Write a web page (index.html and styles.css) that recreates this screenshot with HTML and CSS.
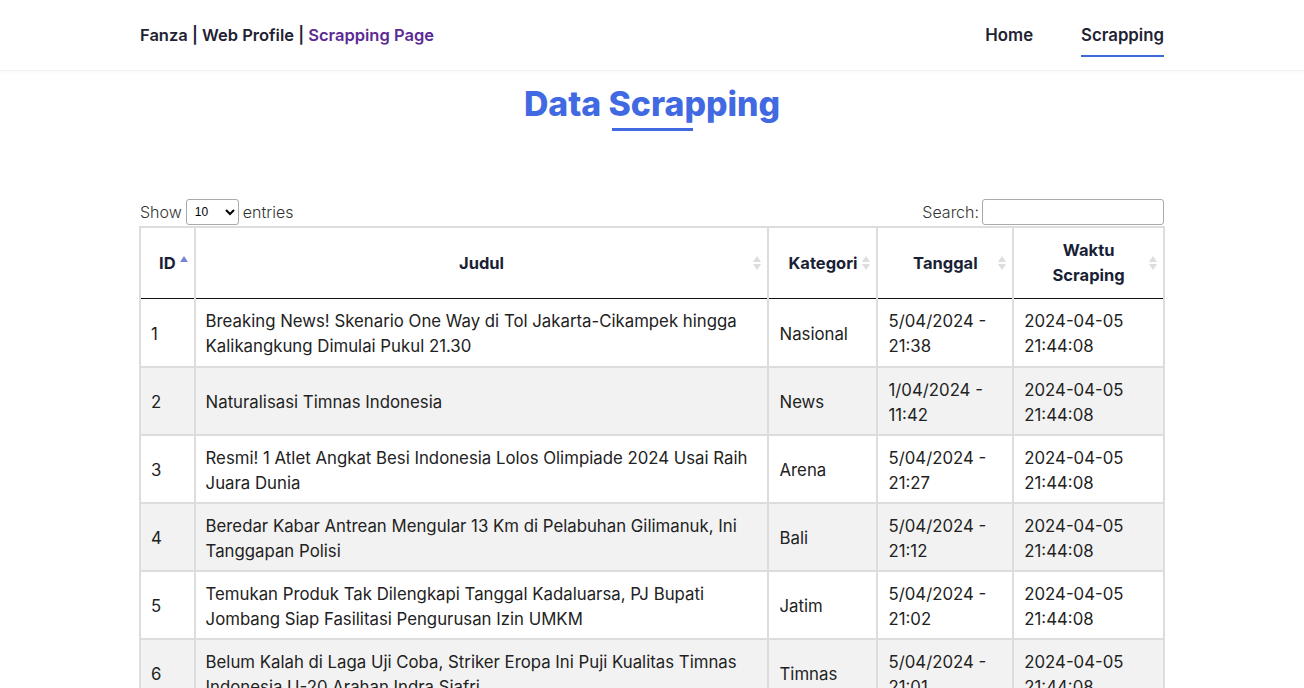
FILE: index.html
```html
<!DOCTYPE html>
<html lang="id">
<head>
<meta charset="utf-8">
<title>Fanza | Web Profile | Scrapping Page</title>
<link rel="stylesheet" href="styles.css">
</head>
<body>
<header class="navbar">
  <div class="container nav-inner">
    <div class="brand">Fanza | Web Profile | <span class="brand-accent">Scrapping Page</span></div>
    <nav class="nav-links">
      <a class="nav-link" href="#">Home</a>
      <a class="nav-link active" href="#">Scrapping</a>
    </nav>
  </div>
</header>
<main class="container">
  <h2 class="page-title">Data Scrapping</h2>
  <div class="title-bar"></div>
  <div class="dt-controls">
    <label class="dt-length">Show <select class="dt-select"><option>10</option></select> entries</label>
    <label class="dt-search">Search:<input class="dt-input" type="text"></label>
  </div>
  <table class="dt-table">
    <colgroup>
      <col class="c-id"><col class="c-judul"><col class="c-kat"><col class="c-tgl"><col class="c-waktu">
    </colgroup>
    <thead>
      <tr>
        <th class="sort asc"><span>ID</span></th>
        <th class="sort"><span>Judul</span></th>
        <th class="sort"><span>Kategori</span></th>
        <th class="sort"><span>Tanggal</span></th>
        <th class="sort"><span>Waktu<br>Scraping</span></th>
      </tr>
    </thead>
    <tbody>
      <tr><td>1</td><td>Breaking News! Skenario One Way di Tol Jakarta-Cikampek hingga Kalikangkung Dimulai Pukul 21.30</td><td>Nasional</td><td>5/04/2024 - 21:38</td><td>2024-04-05 21:44:08</td></tr>
      <tr><td>2</td><td>Naturalisasi Timnas Indonesia</td><td>News</td><td>1/04/2024 - 11:42</td><td>2024-04-05 21:44:08</td></tr>
      <tr><td>3</td><td>Resmi! 1 Atlet Angkat Besi Indonesia Lolos Olimpiade 2024 Usai Raih Juara Dunia</td><td>Arena</td><td>5/04/2024 - 21:27</td><td>2024-04-05 21:44:08</td></tr>
      <tr><td>4</td><td>Beredar Kabar Antrean Mengular 13 Km di Pelabuhan Gilimanuk, Ini Tanggapan Polisi</td><td>Bali</td><td>5/04/2024 - 21:12</td><td>2024-04-05 21:44:08</td></tr>
      <tr><td>5</td><td>Temukan Produk Tak Dilengkapi Tanggal Kadaluarsa, PJ Bupati Jombang Siap Fasilitasi Pengurusan Izin UMKM</td><td>Jatim</td><td>5/04/2024 - 21:02</td><td>2024-04-05 21:44:08</td></tr>
      <tr><td>6</td><td>Belum Kalah di Laga Uji Coba, Striker Eropa Ini Puji Kualitas Timnas Indonesia U-20 Arahan Indra Sjafri</td><td>Timnas</td><td>5/04/2024 - 21:01</td><td>2024-04-05 21:44:08</td></tr>
    </tbody>
  </table>
</main>
</body>
</html>
```
FILE: styles.css
```css
* { box-sizing: border-box; }
html, body { margin: 0; padding: 0; background: #fff; }
body {
  font-family: "Inter", "DejaVu Sans", sans-serif;
  color: #222831;
  font-size: 16px;
}
.container { width: 1024px; margin: 0 auto; }

.navbar {
  height: 71px;
  background: #fff;
  border-bottom: 1px solid #f0f0f0;
  box-shadow: 0 1px 4px rgba(0,0,0,0.04);
}
.nav-inner {
  height: 70px;
  display: flex;
  align-items: center;
  justify-content: space-between;
}
.brand { font-size: 16.5px; font-weight: 600; color: #1f2233; margin-top: -1px; }
.brand-accent { color: #5b2a94; }
.nav-links { display: flex; gap: 48px; height: 100%; align-items: center; }
.nav-link {
  font-size: 16.8px; font-weight: 600; color: #1f2233; text-decoration: none;
  padding-top: 0; padding-bottom: 10px; border-bottom: 2px solid transparent;
  margin-top: 12px;
}
.nav-link.active { border-bottom-color: #3e6ad8; }

.page-title {
  margin: 13px 0 0;
  text-align: center;
  font-size: 33.8px;
  font-weight: 800;
  color: #4169e1;
  line-height: 40px;
}
.title-bar { width: 81px; height: 3px; background: #4169e1; margin: 4px auto 0; }

.dt-controls {
  margin-top: 67px;
  display: flex;
  justify-content: space-between;
  align-items: center;
  font-size: 16px;
  font-weight: 300;
  color: #333;
  height: 28px;
}
.dt-length, .dt-search { display: flex; align-items: center; }
.dt-select {
  margin: 0 4px; width: 53px; height: 26px; font-size: 12px;
  border: 1px solid #aaa; border-radius: 3px; background: #fff; padding: 0 4px;
}
.dt-input {
  margin-left: 3px; width: 182px; height: 26px;
  border: 1px solid #aaa; border-radius: 3px; background: #fff;
}

.dt-table {
  width: 1026px;
  margin-left: -1px;
  border-collapse: collapse;
  border: 2px solid #ddd;
  border-bottom: none;
}
.c-id { width: 53px; }
.c-judul { width: 577px; }
.c-kat { width: 109px; }
.c-tgl { width: 136px; }
.c-waktu { width: 151px; }

.dt-table th {
  position: relative;
  padding: 10px 18px;
  height: 71px;
  font-weight: 700;
  font-size: 16.5px;
  line-height: 25px;
  color: #1a1f36;
  text-align: center;
  border-right: 2px solid #ddd;
  border-bottom: 1px solid #111;
}
.dt-table th.sort::before,
.dt-table th.sort::after {
  content: "";
  position: absolute;
  right: 6px;
  width: 0; height: 0;
  border-left: 4px solid transparent;
  border-right: 4px solid transparent;
}
.dt-table th.sort::before { top: 28px; border-bottom: 6px solid #ddd; }
.dt-table th.sort::after { top: 36px; border-top: 6px solid #ddd; }
.dt-table th.asc::before { border-bottom-color: #7a84d6; }
.dt-table th.asc::after { border-top-color: transparent; }

.dt-table td {
  padding: 10px 10px 6px;
  font-size: 16.8px;
  line-height: 25px;
  color: #222;
  border-right: 2px solid #ddd;
  border-bottom: 2px solid #ddd;
  height: 68px;
  vertical-align: middle;
}
.dt-table tbody tr:nth-child(even) td { background: #f2f2f2; }
```
